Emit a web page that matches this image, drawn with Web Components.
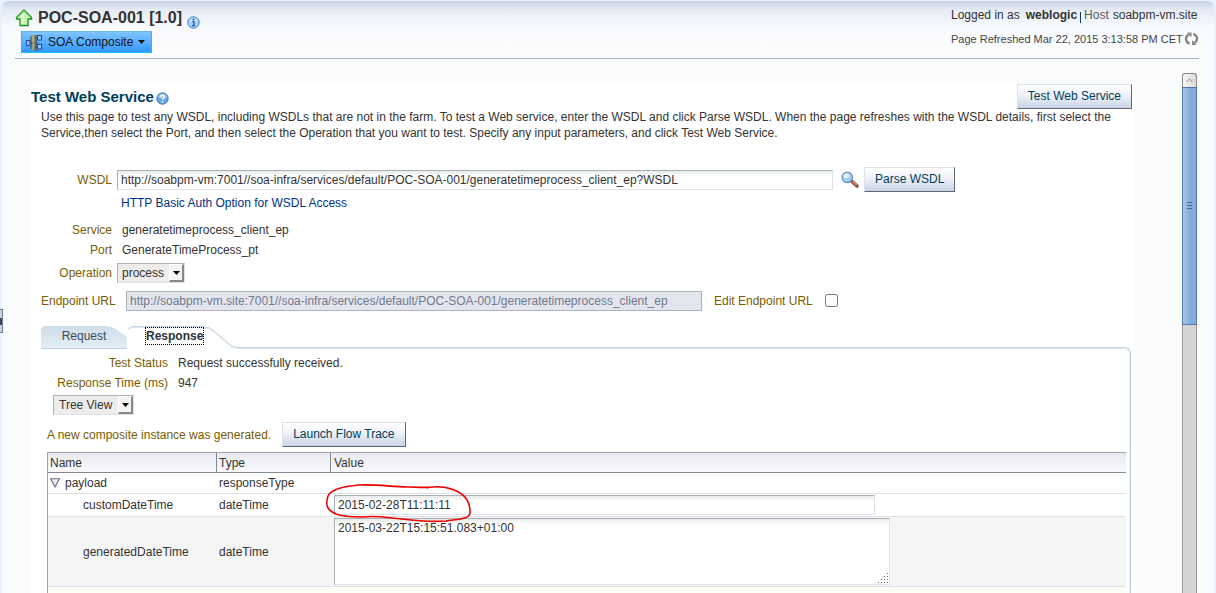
<!DOCTYPE html>
<html lang="en">
<head>
<meta charset="utf-8">
<title>POC-SOA-001 [1.0] - Test Web Service</title>
<style>
  html, body {
    height: 100%;
    margin: 0;
  }
  body {
    background: #e6f2fe;
    color: #333;
    font: 12px/16px "Liberation Sans", Arial, sans-serif;
    overflow: hidden;
  }
</style>
</head>
<body>
<em-shell>
  <page-header slot="header" name="POC-SOA-001 [1.0]" user="weblogic" host="soabpm-vm.site"
    refreshed="Mar 22, 2015 3:13:58 PM CET"></page-header>
  <test-page>
    <wsdl-form></wsdl-form>
    <response-tabs>
      <response-status></response-status>
      <payload-table></payload-table>
    </response-tabs>
  </test-page>
  <scroll-bar slot="scroll"></scroll-bar>
</em-shell>

<script>
const controlStyles = `
  * { box-sizing: border-box; }
  input, textarea, select, button { font: inherit; color: inherit; margin: 0; }
  input[type="text"], textarea {
    border: 1px solid #dfe1eb;
    border-top-color: #abb0b8;
    border-left-color: #abb0b8;
    border-radius: 0;
    padding: 0 3px;
    outline: none;
    background: linear-gradient(#e6ebea, #fff 5px);
  }
  input[type="text"] { height: 20px; }
  label, .label { color: #7a5b00; }
`;

function attach(element, html) {
  const template = document.createElement("template");
  template.innerHTML = html;
  const root = element.attachShadow({ mode: "open" });
  root.appendChild(template.content.cloneNode(true));
  return root;
}

// Frame of the console: header on top, page and scroll bar below
class EmShell extends HTMLElement {
  constructor() {
    super();
    attach(this, `
      <style>
        :host {
          display: flex;
          flex-direction: column;
          box-sizing: border-box;
          height: 100vh;
          padding: 1px 2px 0;
          position: relative;
        }
        .frame {
          flex: 1;
          min-height: 0;
          display: flex;
          flex-direction: column;
          border-radius: 6px 6px 0 0;
          background: linear-gradient(#c7d1e4, #e6ebf4 9px, #f8fafd 26px, #fafbfd 40px);
        }
        .body {
          flex: 1;
          min-height: 0;
          display: flex;
          gap: 48px;
          padding: 0 17px 0 28px;
        }
        .page {
          flex: 1;
          min-width: 0;
          margin-top: 25px;
          background: #fff;
          overflow: hidden;
        }
        .scroll {
          display: flex;
          margin-top: 14px;
        }
        .splitter {
          position: absolute;
          left: 0;
          top: 309px;
          width: 3px;
          height: 24px;
          padding: 0;
          border: 1px solid #6f7d90;
          border-left: 0;
          background: linear-gradient(#c4d2e3 8px, #445 8px, #445 15px, #c4d2e3 15px);
        }
      </style>
      <div class="frame">
        <slot name="header"></slot>
        <div class="body">
          <main class="page"><slot></slot></main>
          <div class="scroll"><slot name="scroll"></slot></div>
        </div>
      </div>
      <button class="splitter" aria-label="Restore pane"></button>
    `);
  }
}

class PageHeader extends HTMLElement {
  constructor() {
    super();
    attach(this, `
      <style>
        :host {
          display: flex;
          justify-content: space-between;
          height: 57px;
          margin: 0 15px 0 13px;
          border-bottom: 1px solid #a3b4c9;
          box-sizing: content-box;
        }
        svg { display: block; flex: none; }
        h1 { margin: 0; font-size: 16px; line-height: 20px; }
        .title {
          display: flex;
          align-items: center;
          gap: 5px;
          height: 30px;
          padding-top: 4px;
          box-sizing: border-box;
        }
        .title info-icon { padding-top: 8px; }
        button {
          display: flex;
          align-items: center;
          height: 22px;
          margin-left: 6px;
          padding: 0 5px 0 3px;
          border: 1px solid #12c0ff;
          border-top-color: #6bb6f5;
          background: linear-gradient(#7fc4ff, #3399ff);
          font: inherit;
          color: #111;
        }
        button span { margin: 0 5px; }
        .session {
          min-width: 248px;
          padding-top: 5px;
          line-height: 18px;
        }
        .session div { display: flex; align-items: center; white-space: nowrap; }
        .session b { margin-left: 6px; }
        .bar { width: 1px; height: 11px; margin: 4px 3px 0; background: #003d6b; }
        .host { color: #5a5a5a; margin-right: 4px; }
        .session .refreshed { margin-top: 6px; font-size: 11px; gap: 1px; color: #444; }
      </style>
      <div>
        <div class="title">
          <svg width="18" height="18" viewBox="0 0 18 18">
            <path d="M9 1 L17 9 V10.500 H13.500 V17 H5 V10.500 H1.500 V9 Z" transform="translate(.5 .5)" fill="#999" opacity=".5"/>
            <path d="M9 1 L16.500 8.500 V10 H13 V16.500 H5 V10 H1.500 V8.500 Z" fill="#c3f5b4" stroke="#1f9a1f" stroke-width="1.300" stroke-linejoin="round"/>
            <path d="M9 3 L6.500 6 V15 H9 Z" fill="#fff" opacity=".6"/>
          </svg>
          <h1></h1>
          <info-icon glyph="i"></info-icon>
        </div>
        <button>
          <svg width="18" height="18" viewBox="0 0 18 18">
            <path d="M5 10 H13 M10 5 H13 M10 14 H13" stroke="#333" stroke-width="1"/>
            <path d="M6 3 V16 M11 2 V18" stroke="#4a4434" stroke-width="1"/>
            <path d="M8.500 2 V17" stroke="#d9a030" stroke-width="2"/>
            <path d="M10 2 V18" stroke="#8a6420" stroke-width="1"/>
            <g fill="#8cc8ff" stroke="#1c4d9c">
              <rect x="1.500" y="7.500" width="3.500" height="5"/>
              <rect x="12.500" y="2.500" width="4" height="4.500"/>
              <rect x="12.500" y="11.500" width="4" height="4.500"/>
            </g>
          </svg>
          <span>SOA Composite</span>
          <svg width="8" height="5" viewBox="0 0 8 5"><path d="M0 0 H7 L3.500 4 Z" fill="#111"/></svg>
        </button>
      </div>
      <div class="session">
        <div>Logged in as <b id="user"></b><i class="bar"></i><span class="host">Host</span> <span id="host"></span></div>
        <div class="refreshed"><span id="refreshed"></span>
          <svg width="15" height="16" viewBox="0 0 16 16">
            <path d="M6 13 C1 11 1 5 5 3.500" fill="none" stroke="#888" stroke-width="2.500"/>
            <path d="M3 1 H8 V6.500 Z" fill="#888"/>
            <path d="M10 2.500 C15 4.500 15 10 11 12" fill="none" stroke="#888" stroke-width="2.500"/>
            <path d="M13.500 14.500 H8.500 V9 Z" fill="#888"/>
          </svg>
        </div>
      </div>
    `);
  }

  connectedCallback() {
    const root = this.shadowRoot;
    root.querySelector("h1").textContent = this.getAttribute("name");
    root.getElementById("user").textContent = this.getAttribute("user");
    root.getElementById("host").textContent = this.getAttribute("host");
    root.getElementById("refreshed").textContent = "Page Refreshed " + this.getAttribute("refreshed");
  }
}

// Round blue badge, glyph is "i" or "help"
class InfoIcon extends HTMLElement {
  constructor() {
    super();
    const help = this.getAttribute("glyph") === "help";
    attach(this, `
      <style>
        :host { display: block; }
        svg { display: block; }
      </style>
      <svg width="13" height="13" viewBox="0 0 13 13">
        <circle cx="6.500" cy="6.500" r="5.700" fill="${help ? "#62a7ea" : "#a6d0fa"}" stroke="#3d7cc9"/>
        <path d="M2 5.500 A4.600 4.600 0 0 1 11 5.500 Q6.500 7.500 2 5.500" fill="#fff" opacity=".35"/>
        ${help
          ? `<path d="M4.700 5 C4.700 2.800 8.300 2.800 8.300 4.900 C8.300 6.200 6.500 6.200 6.500 7.800" fill="none" stroke="#fff" stroke-width="1.500"/><circle cx="6.500" cy="9.800" r=".9" fill="#fff"/>`
          : `<circle cx="6.500" cy="3.600" r="1" fill="#1c5aab"/><path d="M5.300 5.700 H6.900 V9.300 M5 9.600 H8.200" fill="none" stroke="#1c5aab" stroke-width="1.300"/>`}
      </svg>
    `);
  }
}

class PushButton extends HTMLElement {
  constructor() {
    super();
    attach(this, `
      <style>
        :host { display: inline-block; flex: none; }
        button {
          display: block;
          height: 25px;
          padding: 0 10px 2px;
          border: 1px solid #dfe1e8;
          border-right: 2px solid #5b6678;
          border-bottom: 1px solid #5b6678;
          border-right-width: 1px;
          background: linear-gradient(#fff, #eef1f8 45%, #c9d3e6);
          color: #003d5b;
          font: inherit;
          white-space: nowrap;
        }
      </style>
      <button><slot></slot></button>
    `);
  }
}

class DropDown extends HTMLElement {
  constructor() {
    super();
    attach(this, `
      <style>
        ${controlStyles}
        :host { display: inline-block; }
        .box {
          display: inline-flex;
          height: 20px;
          border: 1px solid #dfe1e6;
          border-top-color: #abb0b8;
          border-left-color: #abb0b8;
          background: #eeecea;
        }
        select {
          appearance: none;
          border: 0;
          border-radius: 0;
          padding: 0 4px;
          background: none;
          outline: none;
        }
        :host([wide]) select { padding: 0 5px; }
        .arrow {
          display: grid;
          place-items: center;
          width: 15px;
          border: 1px solid #fff;
          border-right: 2px solid #888;
          border-bottom: 2px solid #888;
          background: #f4f3f1;
          pointer-events: none;
        }
      </style>
      <div class="box">
        <select aria-label="${this.getAttribute("label")}"><option>${this.getAttribute("value")}</option></select>
        <span class="arrow"><svg width="7" height="4" viewBox="0 0 7 4"><path d="M0 0 H7 L3.500 4 Z" fill="#000"/></svg></span>
      </div>
    `);
  }
}

class TestPage extends HTMLElement {
  constructor() {
    super();
    attach(this, `
      <style>
        :host { display: block; padding: 0 2px 0 1px; }
        .top { display: flex; justify-content: space-between; }
        .heading { display: flex; align-items: center; gap: 2px; }
        h2 { margin: 0; font-size: 15px; line-height: 20px; color: #003d5b; }
        .heading info-icon { padding-top: 3px; }
        .content { padding-left: 10px; }
        p { margin: 0 12px 26px 0; }
      </style>
      <div class="top">
        <div class="heading"><h2>Test Web Service</h2><info-icon glyph="help"></info-icon></div>
        <push-button>Test Web Service</push-button>
      </div>
      <div class="content">
        <p>Use this page to test any WSDL, including WSDLs that are not in the farm. To test a Web service, enter the WSDL and click Parse WSDL. When the page refreshes with the WSDL details, first select the Service,then select the Port, and then select the Operation that you want to test. Specify any input parameters, and click Test Web Service.</p>
        <slot></slot>
      </div>
    `);
  }
}

class WsdlForm extends HTMLElement {
  constructor() {
    super();
    attach(this, `
      <style>
        ${controlStyles}
        :host { display: block; }
        .row {
          display: grid;
          grid-template-columns: 71px 1fr;
          column-gap: 5px;
          align-items: center;
          min-height: 20px;
        }
        .row > label, .row > .label { text-align: right; }
        .line { display: flex; align-items: center; }
        .wsdl { width: 716px; }
        .text { padding-left: 5px; }
        a { padding-left: 4px; color: #003286; text-decoration: none; }
        .icon { border: 0; padding: 0; margin: 0 5px 0 8px; background: none; }
        .icon svg { display: block; }
        .link { margin: 1px 0 7px; }
        .operation { margin: 3px 0 8px; }
        .line > label { width: 77px; white-space: nowrap; }
        .line > label + input + label { width: 101px; }
        .endpoint { width: 576px; margin: 0 12px 0 8px; }
        .endpoint:disabled { border-color: #b0b3ba; background: #e2e5ed; color: #72798c; }
        input[type="checkbox"] { width: 13px; height: 13px; margin: 0 0 2px 10px; }
      </style>
      <div class="row">
        <label for="wsdl">WSDL</label>
        <div class="line">
          <input class="wsdl" id="wsdl" type="text" value="http://soabpm-vm:7001//soa-infra/services/default/POC-SOA-001/generatetimeprocess_client_ep?WSDL">
          <button class="icon" aria-label="Browse WSDL">
            <svg width="18" height="18" viewBox="0 0 18 18">
              <path d="M11 10.500 L16 15" stroke="#8a5444" stroke-width="3.600" stroke-linecap="round"/>
              <path d="M11.500 10.500 L15.500 14" stroke="#d09a80" stroke-width="1.300"/>
              <circle cx="6.300" cy="6.300" r="5.200" fill="#a9cff8" stroke="#6a8cc8" stroke-width="1.300"/>
              <ellipse cx="5.300" cy="4.800" rx="2.800" ry="2.200" fill="#fff" opacity=".7"/>
            </svg>
          </button>
          <push-button>Parse WSDL</push-button>
        </div>
      </div>
      <div class="row link"><span></span><a href="#auth">HTTP Basic Auth Option for WSDL Access</a></div>
      <div class="row"><span class="label">Service</span><span class="text">generatetimeprocess_client_ep</span></div>
      <div class="row"><span class="label">Port</span><span class="text">GenerateTimeProcess_pt</span></div>
      <div class="row operation"><span class="label">Operation</span><drop-down label="Operation" value="process"></drop-down></div>
      <div class="line">
        <label for="endpoint">Endpoint URL</label>
        <input class="endpoint" id="endpoint" type="text" disabled value="http://soabpm-vm.site:7001//soa-infra/services/default/POC-SOA-001/generatetimeprocess_client_ep">
        <label for="edit">Edit Endpoint URL</label>
        <input id="edit" type="checkbox">
      </div>
    `);
  }
}

class ResponseTabs extends HTMLElement {
  constructor() {
    super();
    attach(this, `
      <style>
        :host { display: block; margin-top: 15px; }
        .tabs { display: flex; height: 27px; }
        button {
          display: grid;
          place-items: center;
          height: 23px;
          padding: 0;
          border: 0;
          background: none;
          font: inherit;
          color: #3b4a5a;
        }
        button > * { grid-area: 1 / 1; }
        button span { padding-bottom: 3px; }
        svg { display: block; }
        .selected span {
          place-self: start;
          margin: 2px 0 0 19px;
          padding: 0;
          font-weight: bold;
          color: #2b3440;
          outline: 1px dotted #000;
        }
        .rule {
          flex: 1;
          align-self: flex-end;
          box-sizing: border-box;
          height: 6px;
          border: solid #c3d0e2;
          border-width: 1px 1px 0 0;
          border-top-right-radius: 6px;
          box-shadow: inset -1px 1px #dfeaf4;
        }
        .panel {
          border-right: 1px solid #c3d0e2;
          box-shadow: inset -1px 0 #e3edf6;
          padding-bottom: 40px;
        }
        .tabs, .panel { margin-right: 1px; }
      </style>
      <div class="tabs" role="tablist">
        <button role="tab">
          <svg width="86" height="23" viewBox="0 0 86 23">
            <defs><linearGradient id="fill" x2="0" y2="1"><stop offset="0" stop-color="#cfdde9"/><stop offset="1" stop-color="#e3eef7"/></linearGradient></defs>
            <path d="M0 23 V4 Q0 0 5 0 H64 Q71 0 76 4 L86 11 V23 Z" fill="url(#fill)"/>
            <path d="M0 22.500 H86" stroke="#c3d0e2" stroke-width="1"/>
          </svg>
          <span>Request</span>
        </button>
        <button class="selected" role="tab" aria-selected="true">
          <svg width="110" height="23" viewBox="0 0 110 23">
            <g fill="none">
              <path d="M1 3 Q3 1.500 8 1.500 H76 Q82 1.500 87 6 L101 18 Q105 22.500 110 22.500" stroke="#dfeaf4"/>
              <path d="M1 3 Q3 .5 8 .5 H76 Q82 .5 87 5 L101 17 Q105 21.500 110 21.500" stroke="#c3d0e2"/>
            </g>
          </svg>
          <span>Response</span>
        </button>
        <div class="rule"></div>
      </div>
      <div class="panel"><slot></slot></div>
    `);
  }
}

class ResponseStatus extends HTMLElement {
  constructor() {
    super();
    attach(this, `
      <style>
        ${controlStyles}
        :host { display: block; }
        dl {
          display: grid;
          grid-template-columns: 127px 1fr;
          column-gap: 10px;
          margin: 0;
          line-height: 20px;
        }
        dt { text-align: right; }
        dd { margin: 0; }
        .view { display: flex; margin: 2px 0 7px 12px; }
        .trace { display: flex; align-items: center; gap: 11px; margin: 0 0 5px 6px; }
      </style>
      <dl>
        <dt class="label">Test Status</dt><dd>Request successfully received.</dd>
        <dt class="label">Response Time (ms)</dt><dd>947</dd>
      </dl>
      <div class="view"><drop-down wide label="View" value="Tree View"></drop-down></div>
      <div class="trace">
        <span class="label">A new composite instance was generated.</span>
        <push-button>Launch Flow Trace</push-button>
      </div>
    `);
  }
}

class PayloadTable extends HTMLElement {
  constructor() {
    super();
    attach(this, `
      <style>
        ${controlStyles}
        :host { display: block; margin: 0 4px 0 6px; }
        table {
          width: 100%;
          border-collapse: separate;
          border-spacing: 0;
          border-top: 1px solid #9fa3ab;
          border-left: 1px solid #9fa3ab;
          table-layout: fixed;
        }
        col.name { width: 168px; }
        col.type { width: 114px; }
        th {
          height: 20px;
          padding: 0 2px;
          border-bottom: 1px solid #858992;
          background: linear-gradient(#e8eaef, #f9f9fb);
          font-weight: normal;
          text-align: left;
        }
        th + th { border-left: 1px solid #858992; }
        th:last-child { padding-left: 3px; }
        td { padding: 0 3px; border-bottom: 1px solid #dfe0e2; }
        td:first-child { padding-left: 35px; }
        td label { color: inherit; }
        tr.parent td { height: 21px; }
        tr.parent td:first-child { padding-left: 2px; }
        tr.field td { height: 23px; }
        tr.area td { height: 70px; background: #f5f5f5; }
        tr.next td { height: 24px; background: #fefff5; }
        .node { display: flex; align-items: center; gap: 5px; }
        .node button { border: 0; padding: 0; background: none; }
        .node svg, .value > * { display: block; }
        .value { position: relative; margin-left: 1px; }
        .value input { width: 541px; }
        .value textarea { width: 556px; height: 67px; padding-top: 1px; resize: none; }
        .mark { position: absolute; z-index: 1; left: -10px; top: -12px; pointer-events: none; }
        .grip { position: absolute; left: 544px; bottom: 1px; }
      </style>
      <table>
        <colgroup><col class="name"><col class="type"><col></colgroup>
        <thead><tr><th>Name</th><th>Type</th><th>Value</th></tr></thead>
        <tbody>
          <tr class="parent">
            <td><div class="node">
              <button aria-label="Collapse payload">
                <svg width="10" height="10" viewBox="0 0 10 10"><path d="M.7 .8 H9.300 L5 9 Z" fill="#e6eaf0" stroke="#6b727e" stroke-width="1.100"/></svg>
              </button>
              payload
            </div></td>
            <td>responseType</td>
            <td></td>
          </tr>
          <tr class="field">
            <td><label for="custom">customDateTime</label></td>
            <td>dateTime</td>
            <td><div class="value">
              <input id="custom" type="text" value="2015-02-28T11:11:11">
              <svg class="mark" width="150" height="42" viewBox="324 483 150 42">
                <path d="M428 488 C424 487 416 487 408 487 C392 487 376 484 359 485 C347 486 331 489 328 496 C325 505 327 510 336 514 C344 517 352 517 362 517 C378 515 388 518 402 519 C418 521 434 522 446 521 C458 519 471 519 470 512 C470 501 465 494 454 490 C446 487 441 486 433 487 C424 488 416 487 408 487" fill="none" stroke="#f00000" stroke-width="1.600" stroke-linecap="round"/>
              </svg>
            </div></td>
          </tr>
          <tr class="area">
            <td><label for="generated">generatedDateTime</label></td>
            <td>dateTime</td>
            <td><div class="value">
              <textarea id="generated">2015-03-22T15:15:51.083+01:00</textarea>
              <svg class="grip" width="11" height="11" viewBox="0 0 11 11">
                <path d="M0 9.500 H1 M3 9.500 H4 M6 9.500 H7 M9 9.500 H10 M3 6.500 H4 M6 6.500 H7 M9 6.500 H10 M6 3.500 H7 M9 3.500 H10 M9 .5 H10" stroke="#666" stroke-width="1"/>
              </svg>
            </div></td>
          </tr>
          <tr class="next"><td></td><td></td><td></td></tr>
        </tbody>
      </table>
    `);
  }
}

class ScrollBar extends HTMLElement {
  constructor() {
    super();
    attach(this, `
      <style>
        * { box-sizing: border-box; }
        :host { display: flex; flex-direction: column; width: 15px; }
        button {
          display: grid;
          place-items: center;
          height: 14px;
          padding: 0;
          border: 1px solid #8a8885;
          border-bottom: 0;
          border-radius: 3px 3px 0 0;
          background: linear-gradient(90deg, #f7f6f5, #dcdad7);
        }
        .track {
          flex: 1;
          border: solid #9a9996;
          border-width: 0 1px;
          background: #d5d4d2;
        }
        .thumb {
          display: grid;
          place-items: center;
          height: 47%;
          margin: 0 -1px;
          border: 1px solid #5078ad;
          background: linear-gradient(90deg, #a9c6ea, #84a9da 60%, #86abdb);
        }
        svg { display: block; }
      </style>
      <button aria-label="Scroll up"><svg width="7" height="5" viewBox="0 0 7 5"><path d="M.5 4 L3.500 1 L6.500 4" fill="none" stroke="#aaa" stroke-width="1.200"/></svg></button>
      <div class="track">
        <div class="thumb"><svg width="5" height="9" viewBox="0 0 5 9"><path d="M0 1.500 H5 M0 4.500 H5 M0 7.500 H5" stroke="#3f659a"/></svg></div>
      </div>
    `);
  }
}

customElements.define("info-icon", InfoIcon);
customElements.define("push-button", PushButton);
customElements.define("drop-down", DropDown);
customElements.define("scroll-bar", ScrollBar);
customElements.define("page-header", PageHeader);
customElements.define("wsdl-form", WsdlForm);
customElements.define("response-status", ResponseStatus);
customElements.define("payload-table", PayloadTable);
customElements.define("response-tabs", ResponseTabs);
customElements.define("test-page", TestPage);
customElements.define("em-shell", EmShell);
</script>
</body>
</html>
